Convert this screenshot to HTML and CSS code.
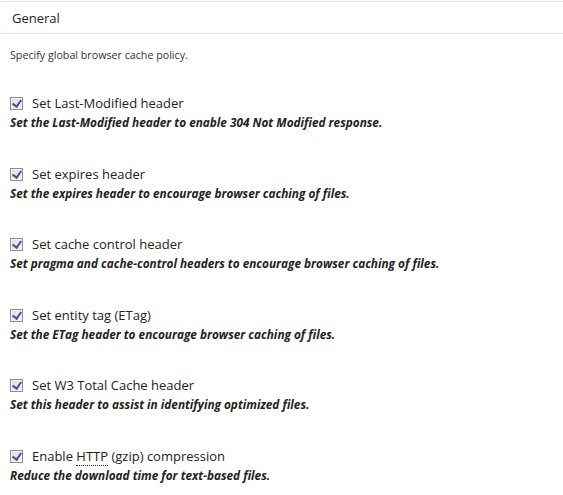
FILE: index.html
```html
<!DOCTYPE html>
<html lang="en">
<head>
  <meta charset="UTF-8" />
  <title>Browser Cache</title>
  <link rel="stylesheet" href="styles.css">
</head>
<body>

  <div class="postbox">
    <h3 class="hndle">General</h3>
    <div class="inside">
      <p class="intro">Specify global browser cache policy.</p>

      <div class="option">
        <label><span class="check"></span>Set Last-Modified header</label>
        <p class="desc">Set the Last-Modified header to enable 304 Not Modified response.</p>
      </div>

      <div class="option">
        <label><span class="check"></span>Set expires header</label>
        <p class="desc">Set the expires header to encourage browser caching of files.</p>
      </div>

      <div class="option">
        <label><span class="check"></span>Set cache control header</label>
        <p class="desc">Set pragma and cache-control headers to encourage browser caching of files.</p>
      </div>

      <div class="option">
        <label><span class="check"></span>Set entity tag (ETag)</label>
        <p class="desc">Set the ETag header to encourage browser caching of files.</p>
      </div>

      <div class="option">
        <label><span class="check"></span>Set W3 Total Cache header</label>
        <p class="desc">Set this header to assist in identifying optimized files.</p>
      </div>

      <div class="option">
        <label><span class="check"></span>Enable <abbr title="Hypertext Transfer Protocol">HTTP</abbr> (gzip) compression</label>
        <p class="desc">Reduce the download time for text-based files.</p>
      </div>
    </div>
  </div>

</body>
</html>
```

FILE: styles.css
```css
* {
  box-sizing: border-box;
}

body {
  margin: 0;
  padding: 0;
  background: #fff;
  font-family: 'Open Sans', 'Noto Sans', sans-serif;
  color: #222;
}

.postbox {
  border-top: 1px solid #e5e5e5;
  margin-top: 1px;
}

.hndle {
  margin: 0;
  padding: 0 12px;
  height: 32px;
  line-height: 32px;
  font-size: 13px;
  font-weight: normal;
  color: #222;
  border-bottom: 1px solid #e5e5e5;
}

.inside {
  padding: 0 10px;
}

.intro {
  margin: 14px 0 0;
  font-size: 10.7px;
  color: #333;
}

.option {
  margin-top: 32px;
}

.option + .option {
  margin-top: 34.5px;
}

.option label {
  display: block;
  font-size: 13px;
  line-height: 18px;
}

/* windows-style checked box */
.check {
  display: inline-block;
  vertical-align: -2px;
  width: 13px;
  height: 13px;
  margin-right: 9px;
  border: 1px solid #8e8f8f;
  background: linear-gradient(135deg, #dcdcdc, #f6f6f6);
  box-shadow: inset 0 0 0 1px #f2f2f2;
  position: relative;
}

.check::after {
  content: "";
  position: absolute;
  left: 3px;
  top: 0px;
  width: 4px;
  height: 7px;
  border: solid #3d52a0;
  border-width: 0 2px 2px 0;
  transform: rotate(35deg);
}

abbr {
  text-decoration: none;
  border-bottom: 1px dotted #222;
}

.desc {
  margin: 2px 0 0;
  font-size: 11.8px;
  font-weight: bold;
  font-style: italic;
  color: #222;
}
```
